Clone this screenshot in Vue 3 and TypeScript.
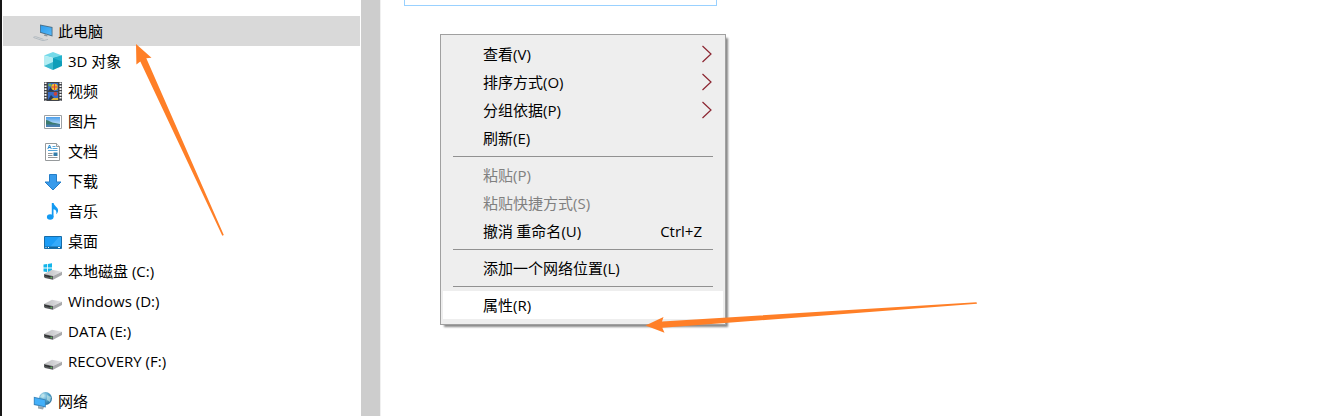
<script setup lang="ts">
interface TreeItem {
  icon: string
  cjk?: string
  latin?: string
  lead?: string
  root?: boolean
  selected?: boolean
  gap?: boolean
  tracking?: number
}
interface MenuItem {
  separator?: boolean
  label?: string
  key?: string
  arrow?: boolean
  disabled?: boolean
  shortcut?: string
  active?: boolean
}

const tree: TreeItem[] = [
  { icon: 'pc', cjk: '此电脑', root: true, selected: true },
  { icon: 'cube', lead: '3D', cjk: '对象' },
  { icon: 'video', cjk: '视频' },
  { icon: 'picture', cjk: '图片' },
  { icon: 'document', cjk: '文档' },
  { icon: 'download', cjk: '下载' },
  { icon: 'music', cjk: '音乐' },
  { icon: 'desktop', cjk: '桌面' },
  { icon: 'system', cjk: '本地磁盘', latin: ' (C:)' },
  { icon: 'disk', latin: 'Windows (D:)', tracking: 0 },
  { icon: 'disk', latin: 'DATA (E:)', tracking: 0 },
  { icon: 'disk', latin: 'RECOVERY (F:)', tracking: 0 },
  { icon: 'network', cjk: '网络', root: true, gap: true },
]

const menu: MenuItem[] = [
  { label: '查看', key: '(V)', arrow: true },
  { label: '排序方式', key: '(O)', arrow: true },
  { label: '分组依据', key: '(P)', arrow: true },
  { label: '刷新', key: '(E)' },
  { separator: true },
  { label: '粘贴', key: '(P)', disabled: true },
  { label: '粘贴快捷方式', key: '(S)', disabled: true },
  { label: '撤消 重命名', key: '(U)', shortcut: 'Ctrl+Z' },
  { separator: true },
  { label: '添加一个网络位置', key: '(L)' },
  { separator: true },
  { label: '属性', key: '(R)', active: true },
]
</script>

<template>
  <div class="window">
    <svg class="defs" width="0" height="0">
      <defs>
        <linearGradient id="blue" x1="0" y1="0" x2="1" y2="1">
          <stop offset="0" stop-color="#2d9cec" /><stop offset="1" stop-color="#55b8f8" />
        </linearGradient>
        <linearGradient id="metal" x1="0" y1="0" x2="1" y2="0">
          <stop offset="0" stop-color="#bdbdc0" /><stop offset="1" stop-color="#e4e4e6" />
        </linearGradient>
        <linearGradient id="sky" x1="0" y1="0" x2="0" y2="1">
          <stop offset="0" stop-color="#4b9eea" /><stop offset="1" stop-color="#eef8ff" />
        </linearGradient>
        <radialGradient id="globe" cx=".35" cy=".3" r=".8">
          <stop offset="0" stop-color="#b8e4f4" /><stop offset=".55" stop-color="#4d9fc6" /><stop offset="1" stop-color="#216390" />
        </radialGradient>
      </defs>
    </svg>

    <nav class="sidebar">
      <div
        v-for="(item, i) in tree"
        :key="i"
        class="row"
        :class="{ root: item.root, selected: item.selected, gap: item.gap }"
      >
        <svg class="icon" width="20" height="20" viewBox="0 0 20 20">
          <g v-if="item.icon === 'pc'">
            <path d="M7 3.5 19.5 6v9.5L7 11.8z" fill="#4b6e86" />
            <path d="M7.7 4.4 18.6 6.7v7.5L7.7 11z" fill="url(#blue)" />
            <path d="m12 13 2.5.8-.2 1.7-3.5-.8z" fill="#8b969d" />
            <path d="m.5 16.5 9.5 3.2 5-1.3M.5 16.2l2-.6 8 2.7" fill="none" stroke="#b3bbc1" stroke-width="1" />
          </g>
          <g v-else-if="item.icon === 'cube'">
            <path d="m10 1 9 3.5L10 7 1 4.5z" fill="#75dae9" />
            <path d="m1 4.5 9 2.5v12l-9-4z" fill="#b2edf3" />
            <path d="m19 4.5-9 2.5v12l9-4z" fill="#0f9eb9" />
            <path d="m1 15 9-4v8z" fill="#3bb9cf" />
            <path d="m10 7 9-2.5v6z" fill="#24b2cd" />
          </g>
          <g v-else-if="item.icon === 'video'">
            <path d="M1 1h18v19H1z" fill="#42454a" />
            <path d="M2.5 1.5v18M17.5 1.5v18" stroke="#fff" stroke-width="2" stroke-dasharray="1.6 1.3" />
            <path d="M5 2h10v8H5zM5 11h10v8H5z" fill="#366cc6" />
            <path d="m5 10 3-4 3 4zM5 19l3-5 5 5z" fill="#263b55" />
            <circle cx="11.5" cy="6" r="3.2" fill="#f3bd2f" /><path d="M8.5 6h6M11.5 3v6" stroke="#d7473a" />
            <circle cx="7" cy="4" r="1.6" fill="#77b746" /><circle cx="12.5" cy="12.8" r="1.9" fill="#ce4337" />
            <path d="M10 17h5v2h-7z" fill="#ddb438" />
          </g>
          <g v-else-if="item.icon === 'picture'">
            <path d="M1.5 4.5h17v13h-17z" fill="#fff" stroke="#9ca1a5" />
            <path d="M3 6h14v10H3z" fill="url(#sky)" />
            <path d="M3 9c3 0 5 3 9 3l5 1v1H3z" fill="#3c7b70" /><path d="M3 13.5h14V16H3z" fill="#497faf" />
          </g>
          <g v-else-if="item.icon === 'document'">
            <path d="M2.5 2.5h11l3 3v14h-14z" fill="#fff" stroke="#969a9c" /><path d="M13.5 2.5v3h3" fill="#eee" stroke="#969a9c" />
            <path d="m4.8 8 1.7-4L8.3 8M5.5 6.5h2.2" fill="none" stroke="#258bd0" />
            <path d="M9.5 5.5h3M9.5 7.5h5M5 9.5h9.5" stroke="#55a6d9" />
            <path d="M5 12.5h4.5M5 14.5h4.5M5 16.5h9.5" stroke="#92979a" /><path d="M10.5 11.5h4v3.5h-4z" fill="#347eaa" />
          </g>
          <path v-else-if="item.icon === 'download'" d="M6.5 3.5h7V11H18l-8 8-8-8h4.5z" fill="#389beb" stroke="#247ec9" />
          <g v-else-if="item.icon === 'music'">
            <ellipse cx="7.2" cy="16" rx="3.3" ry="2.8" fill="#139af2" />
            <path d="M8.8 2h1.8c.5 3 4.5 4.2 4.5 7.5 0 1.5-.7 2.9-1.8 3.8.5-3-.4-4.5-2.8-5v8H8.8z" fill="#139af2" />
          </g>
          <g v-else-if="item.icon === 'desktop'">
            <path d="M1.5 5.5h17v12h-17z" fill="#1b9cf6" stroke="#176ca8" />
            <path d="M7 16 16 6h2v10z" fill="#35aafb" /><path d="M2 15.5h16v1.5H2z" fill="#12669d" />
            <path d="M2.5 16.5h1M5 16.5h1M15 16.5h2" stroke="#fff" />
          </g>
          <g v-else-if="item.icon === 'network'">
            <circle cx="12.5" cy="7.5" r="6.5" fill="url(#globe)" />
            <path d="M9 3c3-1 3 2 1 4L7 6zM14 4l4 2-1 5-3-2z" fill="#c6e8e9" opacity=".65" />
            <path d="m5 15 6 1-1 2.5-5-1z" fill="#9aa7ae" />
            <path d="m.8 5.8 12 2.7v8L.8 14z" fill="#3a86bd" /><path d="m1.7 7 10.2 2.3v5.9L1.7 13z" fill="#43b0fa" />
          </g>
          <g v-else>
            <path v-if="item.icon === 'system'" d="M.5 3.5 4 3v3.6H.5zM4.8 2.9 9 2.3v4.3H4.8zM.5 7.4H4V11l-3.5-.5zM4.8 7.4H9v4.3l-4.2-.6z" fill="#13b5ea" />
            <path d="m1 13 8-4.2 10 2-9 4.3z" fill="url(#metal)" />
            <path d="m1 13 9 2.1v3.6l-8-1.8-1-1z" fill="#55585a" />
            <path d="m10 15.1 9-4.3v3.3l-9 4.6z" fill="#a9aaac" />
            <path d="m2 14.5 6.3 1.5" stroke="#252728" /><path d="m7.5 15.8 1.5.3v1.2l-1.5-.3z" fill="#5fbf57" />
          </g>
        </svg>
        <span class="label"><span v-if="item.lead" class="latin">{{ item.lead + ' ' }}</span>{{ item.cjk }}<span v-if="item.latin" class="latin">{{ item.latin }}</span></span>
      </div>
    </nav>
    <div class="splitter"></div>

    <main class="content">
      <div class="tile"></div>
      <div class="menu">
        <template v-for="(item, i) in menu" :key="i">
          <div v-if="item.separator" class="separator"></div>
          <div v-else class="item" :class="{ disabled: item.disabled, active: item.active }">
            <span>{{ item.label }}<span class="latin">{{ item.key }}</span></span>
            <span v-if="item.shortcut" class="latin shortcut">{{ item.shortcut }}</span>
            <svg v-if="item.arrow" class="chevron" width="12" height="18" viewBox="0 0 12 18">
              <path d="m1.5 1 8.5 8-8.5 8" fill="none" stroke="#8b2530" stroke-width="1.2" />
            </svg>
          </div>
        </template>
      </div>
    </main>

    <svg class="annotations" width="1339" height="416" viewBox="0 0 1339 416">
      <g fill="#ff7f27">
        <path d="M136 44 151.5 57.8 146.3 58.3 223.8 235 222.3 235.8 140.3 61.5 136.4 64.5z" />
        <path d="M645.5 325.5 663.5 317 662 321.5 976.5 302.2 977 303.7 662.3 327.8 664.5 332.7z" />
      </g>
    </svg>
  </div>
</template>

<style>
body { margin: 0; overflow: hidden; }
</style>

<style scoped>
.window {
  position: relative;
  display: flex;
  box-sizing: border-box;
  width: 1339px;
  height: 416px;
  overflow: hidden;
  border-left: 2px solid #171717;
  background: #fff;
  color: #000;
  font: 15px/20px "Noto Sans CJK SC", sans-serif;
  white-space: pre;
}
.defs { position: absolute; }
.sidebar { flex: 0 0 359px; box-sizing: border-box; padding: 16px 1px 0; }
.row { display: flex; align-items: center; height: 30px; padding-left: 40px; }
.row.root { padding-left: 30px; }
.row.selected { background: #d9d9d9; }
.row.gap { margin-top: 10px; }
.icon { flex: none; margin-right: 5px; }
.label { line-height: 30px; }
.latin { font-family: "Open Sans", "Noto Sans", sans-serif; font-size: 15px; }
.splitter { flex: 0 0 19px; border-right: 1px solid #f0f0f0; background: #cdcdcd; }
.content { flex: 1; padding-left: 23px; }
.tile { box-sizing: border-box; width: 313px; height: 6px; border: 1px solid #99d1ff; border-top: 0; }
.menu {
  box-sizing: border-box;
  width: 286px;
  height: 291px;
  margin: 28px 0 0 36px;
  padding: 5px 2px;
  border: 1px solid #a0a0a0;
  background: #eee;
  box-shadow: 3px 3px 2px -1px #888;
}
.item { display: flex; align-items: center; height: 28px; padding: 0 10px 0 40px; }
.item.active { background: #fff; }
.disabled { color: #808080; }
.separator { height: 1px; margin: 4px 10px; background: #919191; }
.shortcut { margin-left: auto; padding-right: 11px; }
.chevron { margin-left: auto; }
.annotations { position: absolute; top: 0; left: -2px; pointer-events: none; }
</style>
